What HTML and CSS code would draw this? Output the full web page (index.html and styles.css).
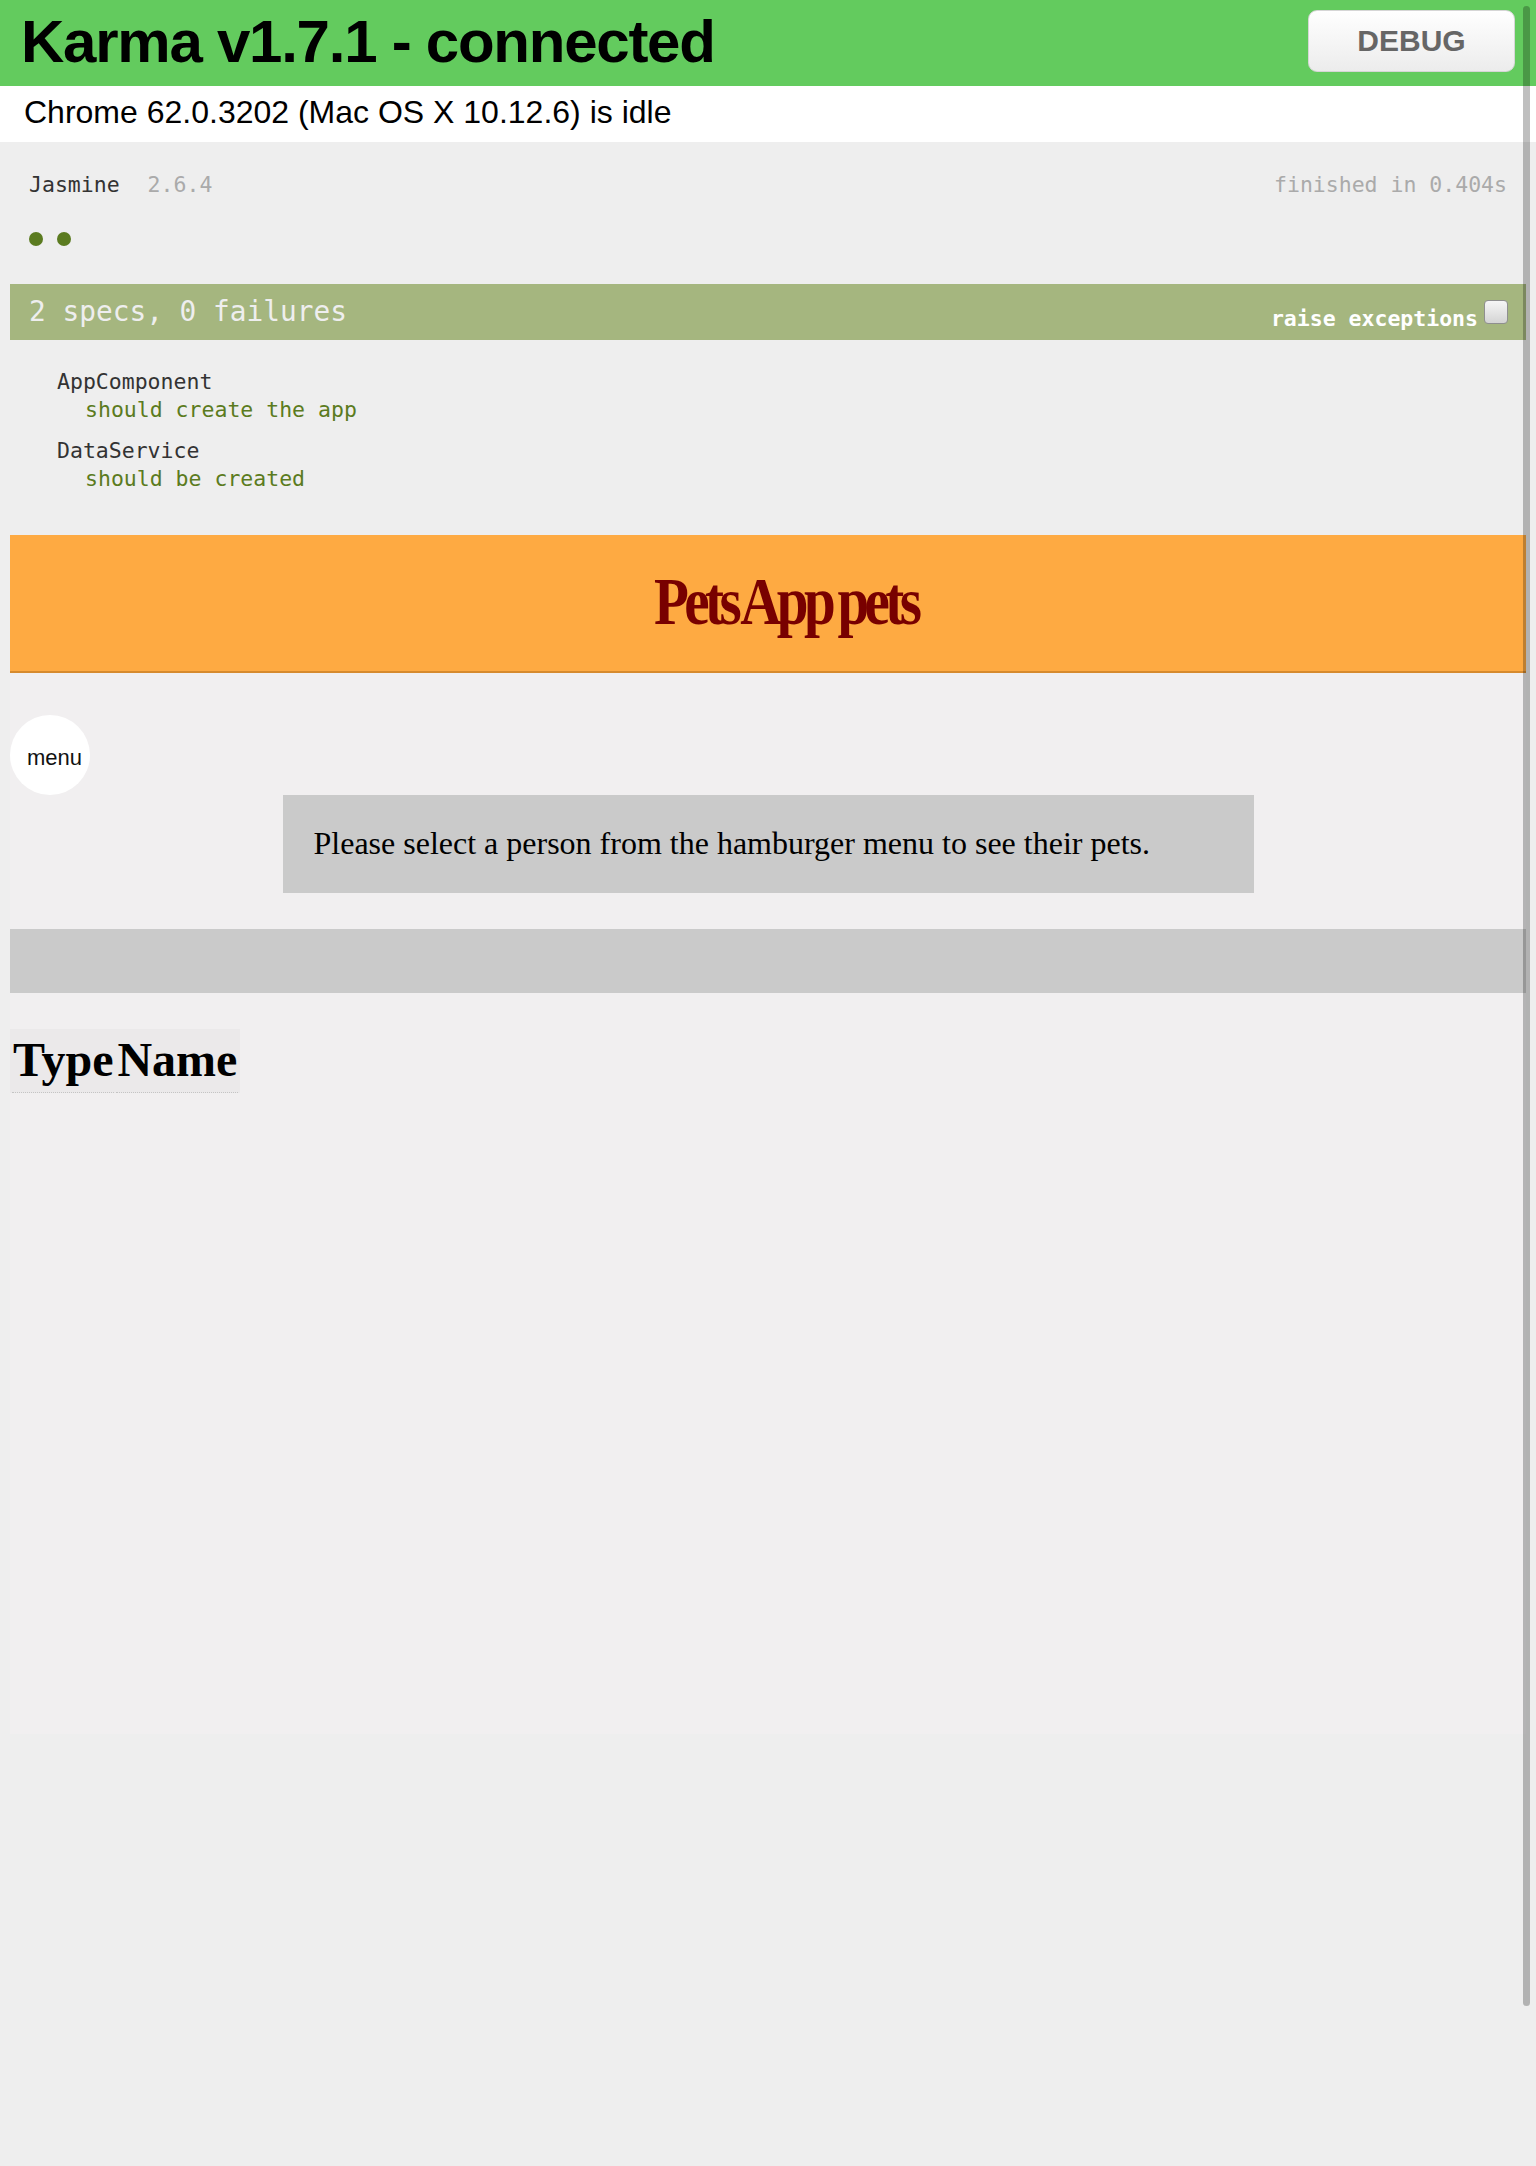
FILE: index.html
```html
<!DOCTYPE html>
<html>
<head>
<meta charset="utf-8">
<title>Karma</title>
<link rel="stylesheet" href="styles.css">
</head>
<body>
<div class="banner">
  <h1 class="title">Karma v1.7.1 - connected</h1>
  <button class="debug">DEBUG</button>
</div>
<div class="browsers">Chrome 62.0.3202 (Mac OS X 10.12.6) is idle</div>
<div class="frame">
  <div class="reporter">
    <div class="jbanner">
      <span class="jtitle">Jasmine</span><span class="jversion">2.6.4</span>
      <span class="jduration">finished in 0.404s</span>
    </div>
    <div class="dots"><span class="dot"></span><span class="dot"></span></div>
    <div class="bar">
      <span class="bar-text">2 specs, 0 failures</span>
      <span class="raise">raise exceptions<span class="checkbox"></span></span>
    </div>
    <div class="summary">
      <div class="suite">
        <div class="suite-name">AppComponent</div>
        <div class="spec">should create the app</div>
      </div>
      <div class="suite">
        <div class="suite-name">DataService</div>
        <div class="spec">should be created</div>
      </div>
    </div>
  </div>
  <div class="app">
    <div class="app-header"><h1 class="app-title"><span class="app-title-text">Pets App pets</span></h1></div>
    <div class="menu-btn">menu</div>
    <div class="message">Please select a person from the hamburger menu to see their pets.</div>
    <div class="band"></div>
    <table class="pets">
      <thead><tr><th>Type</th><th>Name</th></tr></thead>
    </table>
  </div>
</div>
<div class="scrollbar"></div>
</body>
</html>
```
FILE: styles.css
```css
html, body {
  margin: 0;
  padding: 0;
}
body {
  background: #eeeeee;
  position: relative;
  min-height: 2166px;
  font-family: "Liberation Sans", Arial, sans-serif;
}
.banner {
  height: 86px;
  background: #63cb5e;
  display: flex;
  align-items: flex-start;
}
.title {
  margin: 0;
  padding: 12px 0 0 21px;
  font: 700 60px/60px "Liberation Sans", Arial, sans-serif;
  letter-spacing: -1.25px;
  color: #000;
}
.debug {
  margin: 10px 21px 0 auto;
  width: 207px;
  height: 62px;
  border: 1px solid #d6d6d6;
  border-radius: 9px;
  background: linear-gradient(#ffffff, #ececec);
  font: 700 30px "Liberation Sans", Arial, sans-serif;
  color: #666;
  padding: 0;
}
.browsers {
  height: 56px;
  background: #fff;
  font-size: 32px;
  line-height: 42px;
  padding: 5px 0 0 24px;
  color: #000;
  box-sizing: border-box;
}
.frame {
  padding: 0 10px;
}
.reporter {
  font-family: "DejaVu Sans Mono", "Liberation Mono", monospace;
  font-size: 21.5px;
  color: #333;
}
.jbanner {
  padding: 29px 19px 0;
  line-height: 27px;
  display: flex;
}
.jtitle { color: #333; }
.jversion {
  color: #aaa;
  margin-left: 28px;
}
.jduration {
  margin-left: auto;
  color: #aaa;
}
.dots {
  display: flex;
  gap: 14px;
  padding-left: 19px;
  margin-top: 34px;
  height: 14px;
}
.dot {
  width: 14px;
  height: 14px;
  border-radius: 50%;
  background: #5b7b20;
}
.bar {
  margin-top: 38px;
  height: 56px;
  background: #a5b67f;
  display: flex;
  align-items: flex-start;
  padding: 0 18px 0 19px;
}
.bar-text {
  font-size: 27.8px;
  line-height: 56px;
  color: #eee;
}
.raise {
  margin-left: auto;
  margin-top: 21px;
  font-weight: 700;
  color: #fff;
  line-height: 27px;
  display: flex;
  align-items: flex-start;
}
.checkbox {
  width: 22px;
  height: 22px;
  margin-left: 6px;
  margin-top: -5px;
  border: 1px solid #8f8f8f;
  border-radius: 4px;
  background: linear-gradient(#f6f6f6, #d4d4d4);
}
.summary {
  padding: 28px 0 0 47px;
  line-height: 28px;
}
.suite + .suite {
  margin-top: 13px;
}
.suite-name { color: #333; }
.spec {
  color: #5b7b20;
  padding-left: 28px;
}
.app {
  margin-top: 42px;
  background: #f1eff0;
  height: 1199px;
  box-sizing: border-box;
}
.app-header {
  height: 138px;
  background: #feaa42;
  border-bottom: 2px solid #d68a2e;
  box-sizing: border-box;
  text-align: center;
}
.app-title {
  margin: 0;
  padding: 26px 0 0 36px;
  font: 700 68px/80px "Liberation Serif", "Times New Roman", serif;
  color: #780000;
}
.app-title-text {
  display: inline-block;
  letter-spacing: -5.5px;
  word-spacing: -4px;
  transform: scaleX(0.84);
}
.menu-btn {
  margin-top: 42px;
  width: 80px;
  height: 80px;
  border-radius: 50%;
  background: #fff;
  box-sizing: border-box;
  padding: 3px 0 0 9px;
  text-align: center;
  line-height: 80px;
  font-size: 22px;
  color: #111;
}
.message {
  width: 971px;
  margin: 0 auto;
  box-sizing: border-box;
  padding: 30px 31px 31px;
  background: #cacaca;
  font: 32px "Liberation Serif", "Times New Roman", serif;
  color: #000;
}
.band {
  margin-top: 36px;
  height: 64px;
  background: #cacaca;
}
.pets {
  margin-top: 36px;
  background: #ebe9ea;
  border-spacing: 2px 0;
  padding-top: 2px;
  font-family: "Liberation Serif", "Times New Roman", serif;
}
.pets th {
  font-size: 48px;
  font-weight: 700;
  padding: 1px 1px 5px;
  border-bottom: 1px dotted #c4c4c4;
  color: #000;
}
.scrollbar {
  position: absolute;
  left: 1523px;
  top: 6px;
  width: 7px;
  height: 2000px;
  border-radius: 4px;
  background: rgba(0, 0, 0, 0.25);
}
```
